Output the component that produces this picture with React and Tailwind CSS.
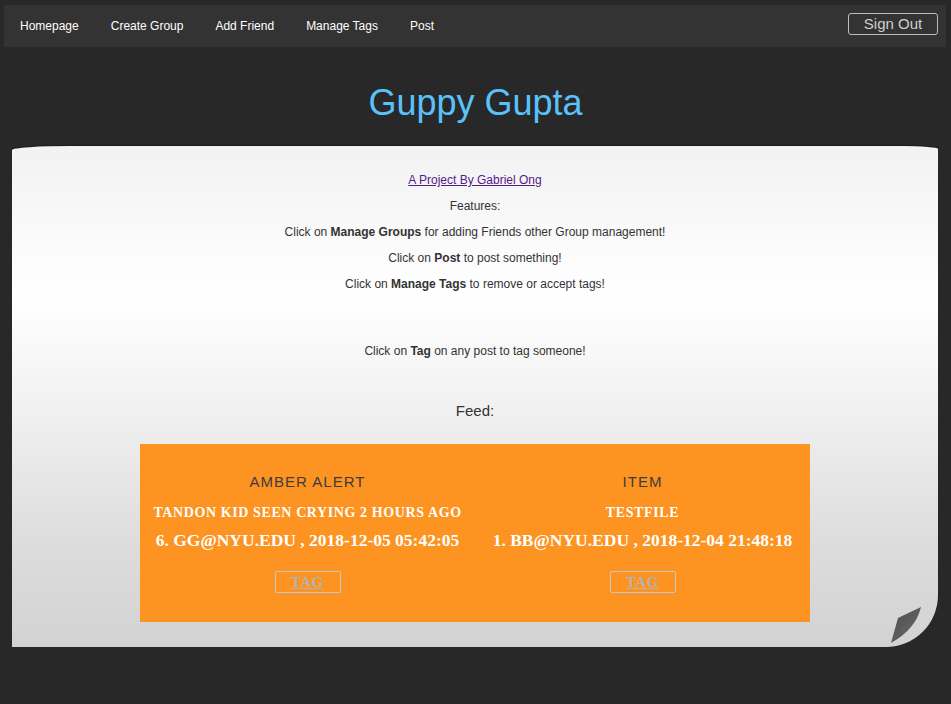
import React from "react";

const sans = { fontFamily: '"Liberation Sans", Arial, sans-serif' };
const serif = { fontFamily: '"Liberation Serif", "Times New Roman", serif' };

function Post({ category, title, meta }) {
  return (
    <div className="flex flex-col items-center">
      <div className="mt-[29px] text-[15px] leading-[18px] tracking-[1px] text-[#3d3d3d]" style={sans}>
        {category}
      </div>
      <div className="mt-[14px] text-[14px] leading-[16px] font-bold text-white tracking-[0.6px]" style={serif}>
        {title}
      </div>
      <div className="mt-[9px] text-[17.5px] leading-[20px] font-bold text-white" style={serif}>
        {meta}
      </div>
      <button className="mt-[21px] w-[66px] h-[22px] border border-[#c8c8c8] rounded-[2px] flex items-center justify-center">
        <span className="text-[15px] font-bold text-[#b3b3b3] underline tracking-[0.5px]" style={serif}>
          TAG
        </span>
      </button>
    </div>
  );
}

export default function App() {
  return (
    <div className="min-h-[704px] bg-[#282828] pt-[5px]" style={sans}>
      <nav className="ml-[4px] mr-[5px] h-[42px] bg-[#333333] flex items-center">
        {["Homepage", "Create Group", "Add Friend", "Manage Tags", "Post"].map((l) => (
          <a key={l} className="px-4 text-[12px] text-white leading-[14px] cursor-pointer">
            {l}
          </a>
        ))}
        <div className="flex-1" />
        <button className="mr-[8px] mb-[5px] w-[90px] h-[22px] border border-[#bdbdbd] rounded-[3px] text-[15px] leading-[18px] text-[#cfcfcf] flex items-center justify-center">
          Sign Out
        </button>
      </nav>

      <h1 className="mt-[36px] text-center text-[36px] leading-[40px] text-[#5ac1f9]">Guppy Gupta</h1>

      <div
        className="relative mt-[23px] ml-[12px] w-[926px] h-[501px] rounded-tl-[60px_4px] rounded-tr-[36px_3px] rounded-br-[52px] shadow-[0_-1px_1px_rgba(0,0,0,0.35)] bg-[linear-gradient(to_bottom,#f2f2f2_0%,#ffffff_30%,#efefef_55%,#dcdcdc_80%,#d3d3d3_100%)] pt-[21px] flex flex-col items-center"
      >
        <div className="text-[12px] leading-[26px] text-center text-[#333]">
          <a className="text-[#551a8b] underline cursor-pointer">A Project By Gabriel Ong</a>
        </div>
        <div className="text-[12px] leading-[26px] text-center text-[#333]">Features:</div>
        <div className="text-[12px] leading-[26px] text-center text-[#333]">
          Click on <b>Manage Groups</b> for adding Friends other Group management!
        </div>
        <div className="text-[12px] leading-[26px] text-center text-[#333]">
          Click on <b>Post</b> to post something!
        </div>
        <div className="text-[12px] leading-[26px] text-center text-[#333]">
          Click on <b>Manage Tags</b> to remove or accept tags!
        </div>
        <div className="mt-[41px] text-[12px] leading-[26px] text-center text-[#333]">
          Click on <b>Tag</b> on any post to tag someone!
        </div>
        <div className="mt-[37px] text-[15px] leading-[20px] text-center text-[#333]">Feed:</div>

        <div className="mt-[23px] w-[670px] h-[178px] bg-[#fd9320] grid grid-cols-2">
          <Post category="AMBER ALERT" title="TANDON KID SEEN CRYING 2 HOURS AGO" meta="6. GG@NYU.EDU , 2018-12-05 05:42:05" />
          <Post category="ITEM" title="TESTFILE" meta="1. BB@NYU.EDU , 2018-12-04 21:48:18" />
        </div>

        <svg className="absolute right-0 bottom-0" width="52" height="52" viewBox="0 0 52 52">
          <defs>
            <linearGradient id="curl" x1="0" y1="0" x2="1" y2="1">
              <stop offset="0" stopColor="#4a4a4a" />
              <stop offset="1" stopColor="#6e6e6e" />
            </linearGradient>
          </defs>
          <path d="M12 23 L35 12 Q30 34 5 48 Z" fill="url(#curl)" />
        </svg>
      </div>
    </div>
  );
}
